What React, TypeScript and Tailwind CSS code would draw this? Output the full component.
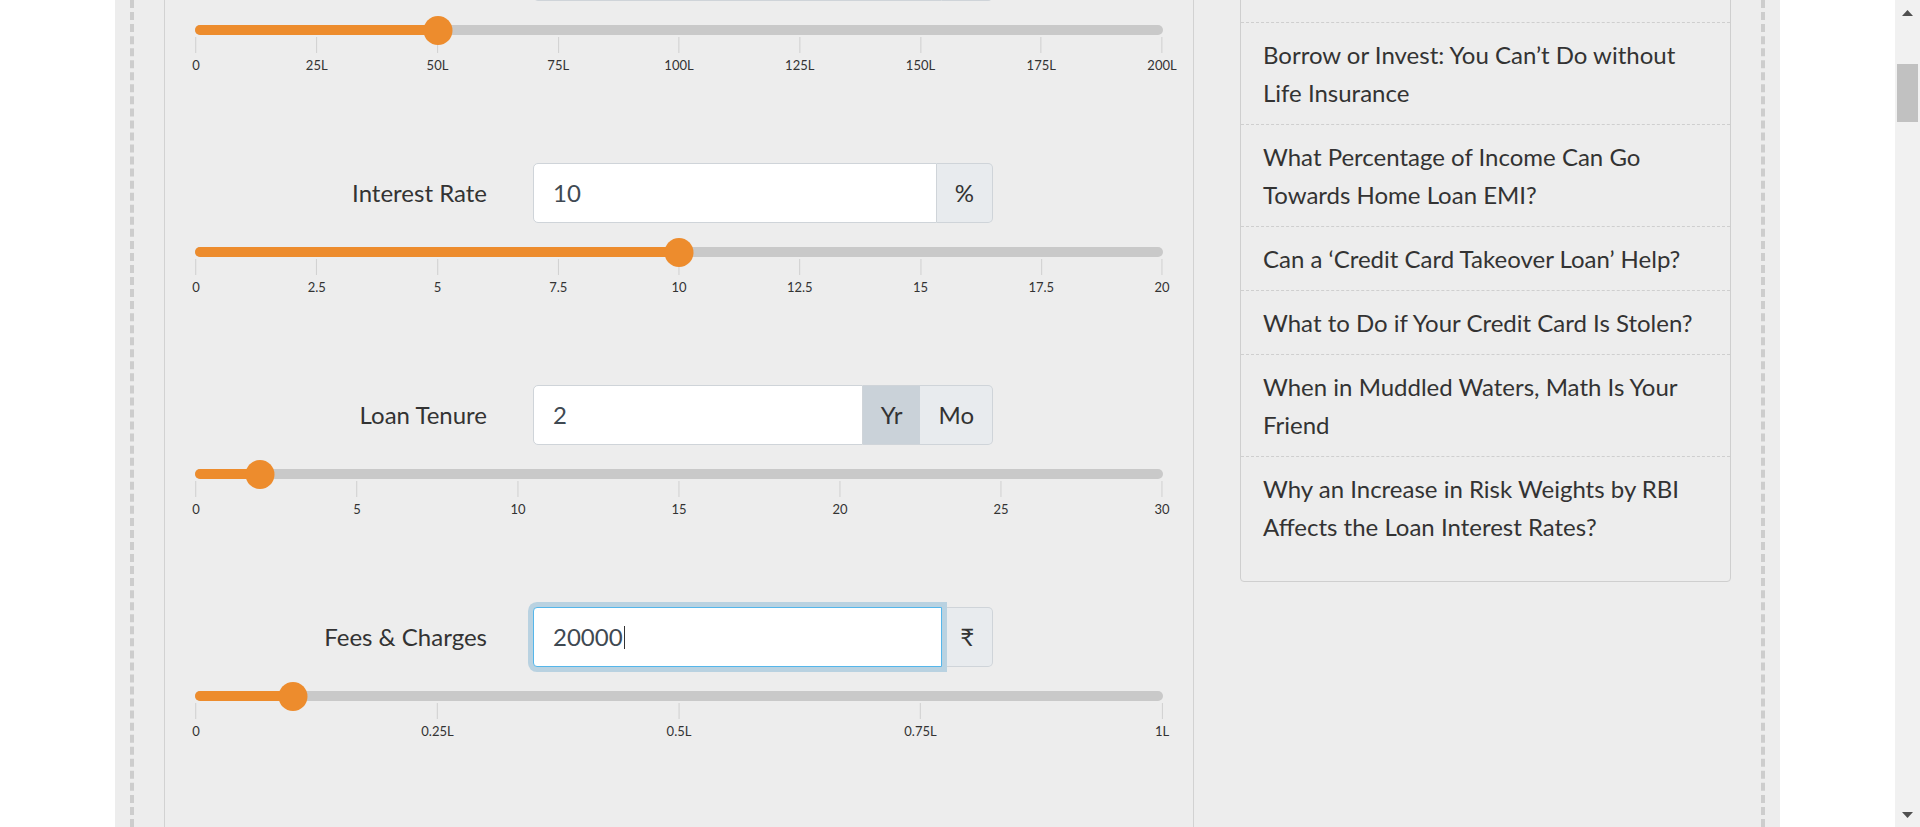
import React from "react";

type FieldProps = {
  label: string;
  value: string;
  addons: { text: string; active?: boolean }[];
  focused?: boolean;
  ticks: string[];
  pct: number;
};

const fields: FieldProps[] = [
  {
    label: "Loan Amount",
    value: "5000000",
    addons: [{ text: "₹" }],
    ticks: ["0", "25L", "50L", "75L", "100L", "125L", "150L", "175L", "200L"],
    pct: 0.25,
  },
  {
    label: "Interest Rate",
    value: "10",
    addons: [{ text: "%" }],
    ticks: ["0", "2.5", "5", "7.5", "10", "12.5", "15", "17.5", "20"],
    pct: 0.5,
  },
  {
    label: "Loan Tenure",
    value: "2",
    addons: [{ text: "Yr", active: true }, { text: "Mo" }],
    ticks: ["0", "5", "10", "15", "20", "25", "30"],
    pct: 2 / 30,
  },
  {
    label: "Fees & Charges",
    value: "20000",
    addons: [{ text: "₹" }],
    focused: true,
    ticks: ["0", "0.25L", "0.5L", "0.75L", "1L"],
    pct: 0.1,
  },
];

const articles = [
  "Borrow or Invest: You Can’t Do without Life Insurance",
  "What Percentage of Income Can Go Towards Home Loan EMI?",
  "Can a ‘Credit Card Takeover Loan’ Help?",
  "What to Do if Your Credit Card Is Stolen?",
  "When in Muddled Waters, Math Is Your Friend",
  "Why an Increase in Risk Weights by RBI Affects the Loan Interest Rates?",
];

// position along the track, 1px inset on both ends
const at = (p: number) => `calc(1px + ${p} * (100% - 2px))`;

function RangeSlider({ ticks, pct }: { ticks: string[]; pct: number }) {
  return (
    <div className="relative mt-[14px] h-[60px]">
      <div className="absolute left-0 right-0 top-[10px] h-[10px] rounded-full bg-[#c9c9c9]" />
      <div
        className="absolute left-0 top-[10px] h-[10px] rounded-l-full bg-[#ed8c2d]"
        style={{ width: at(pct) }}
      />
      {ticks.map((t, i) => (
        <div
          key={t}
          className="absolute top-[22px] flex -translate-x-1/2 flex-col items-center"
          style={{ left: at(i / (ticks.length - 1)) }}
        >
          <span className="h-4 w-px bg-[#d0d0d0]" />
          <span className="mt-1 text-[13px] leading-4 text-[#333]">{t}</span>
        </div>
      ))}
      <div
        className="absolute top-[0.5px] h-[29px] w-[29px] -translate-x-1/2 rounded-full bg-[#ed8c2d]"
        style={{ left: at(pct) }}
      />
    </div>
  );
}

function Field({ label, value, addons, focused, ticks, pct }: FieldProps) {
  return (
    <div>
      <div className="flex items-center">
        <div className="w-[292px] text-right text-[24px] text-[#333]">{label}</div>
        <div className="ml-[46px] flex h-[60px] w-[460px]">
          <div
            className={
              focused
                ? "relative z-10 flex flex-1 items-center rounded-l-[4px] border border-[#55b6ea] bg-white pl-[19px] text-[24px] text-[#3f4952] shadow-[0_0_0_5px_#b9d2e1]"
                : "flex flex-1 items-center rounded-l-[5px] border border-[#cfd4d9] bg-white pl-[19px] text-[24px] text-[#3f4952]"
            }
          >
            {value}
            {focused && <span className="ml-px h-[23px] w-px bg-[#333]" />}
          </div>
          {addons.map((a, i) => (
            <div
              key={a.text}
              className={
                (a.active ? "bg-[#cad2d9] " : "bg-[#e8ebee] ") +
                (i === addons.length - 1 ? "rounded-r-[5px] border-r " : "") +
                "flex items-center border-y border-[#cfd4d9] px-[18px] text-[24px] text-[#333]"
              }
            >
              {a.text}
            </div>
          ))}
        </div>
      </div>
      <RangeSlider ticks={ticks} pct={pct} />
    </div>
  );
}

function Scrollbar() {
  return (
    <div className="flex w-[25px] shrink-0 flex-col items-center bg-[#f1f1f1]">
      <div className="flex h-[25px] items-center justify-center">
        <svg width="11" height="6" viewBox="0 0 11 6">
          <path d="M0 6 L5.5 0 L11 6 Z" fill="#505050" />
        </svg>
      </div>
      <div className="mt-[39px] h-[58px] w-[21px] bg-[#c1c1c1]" />
      <div className="flex-1" />
      <div className="flex h-[25px] items-center justify-center">
        <svg width="11" height="6" viewBox="0 0 11 6">
          <path d="M0 0 L11 0 L5.5 6 Z" fill="#505050" />
        </svg>
      </div>
    </div>
  );
}

export default function App() {
  return (
    <div className="flex h-[827px] w-full overflow-hidden bg-white font-['Lato',sans-serif]">
      <div className="flex-1">
        <div className="mx-auto h-full w-[1665px] bg-[#ededed] px-[15px]">
          <div className="flow-root h-full overflow-hidden border-x-4 border-dashed border-[#cdcdcd] px-[30px]">
            <div className="-mt-[100px] flex gap-[46px]">
              {/* Calculator card */}
              <div className="w-[1030px] shrink-0 border-x border-[#d2d2d2] px-[30px] pb-[120px] pt-[41px]">
                <div className="flex flex-col gap-[88px]">
                  {fields.map((f) => (
                    <Field key={f.label} {...f} />
                  ))}
                </div>
              </div>

              {/* Related articles */}
              <div className="h-fit w-[491px] shrink-0 rounded-b-[4px] border border-[#cfcfcf] pb-[23px]">
                <div className="h-[122px] border-b border-dashed border-[#cfcfcf]" />
                <ul>
                  {articles.map((a, i) => (
                    <li
                      key={a}
                      className={
                        (i < articles.length - 1 ? "border-b border-dashed border-[#cfcfcf] " : "") +
                        "py-[12.5px] pl-[22px] pr-[22px] text-[24px] leading-[38px] text-[#333]"
                      }
                    >
                      {a}
                    </li>
                  ))}
                </ul>
              </div>
            </div>
          </div>
        </div>
      </div>
      <Scrollbar />
    </div>
  );
}
